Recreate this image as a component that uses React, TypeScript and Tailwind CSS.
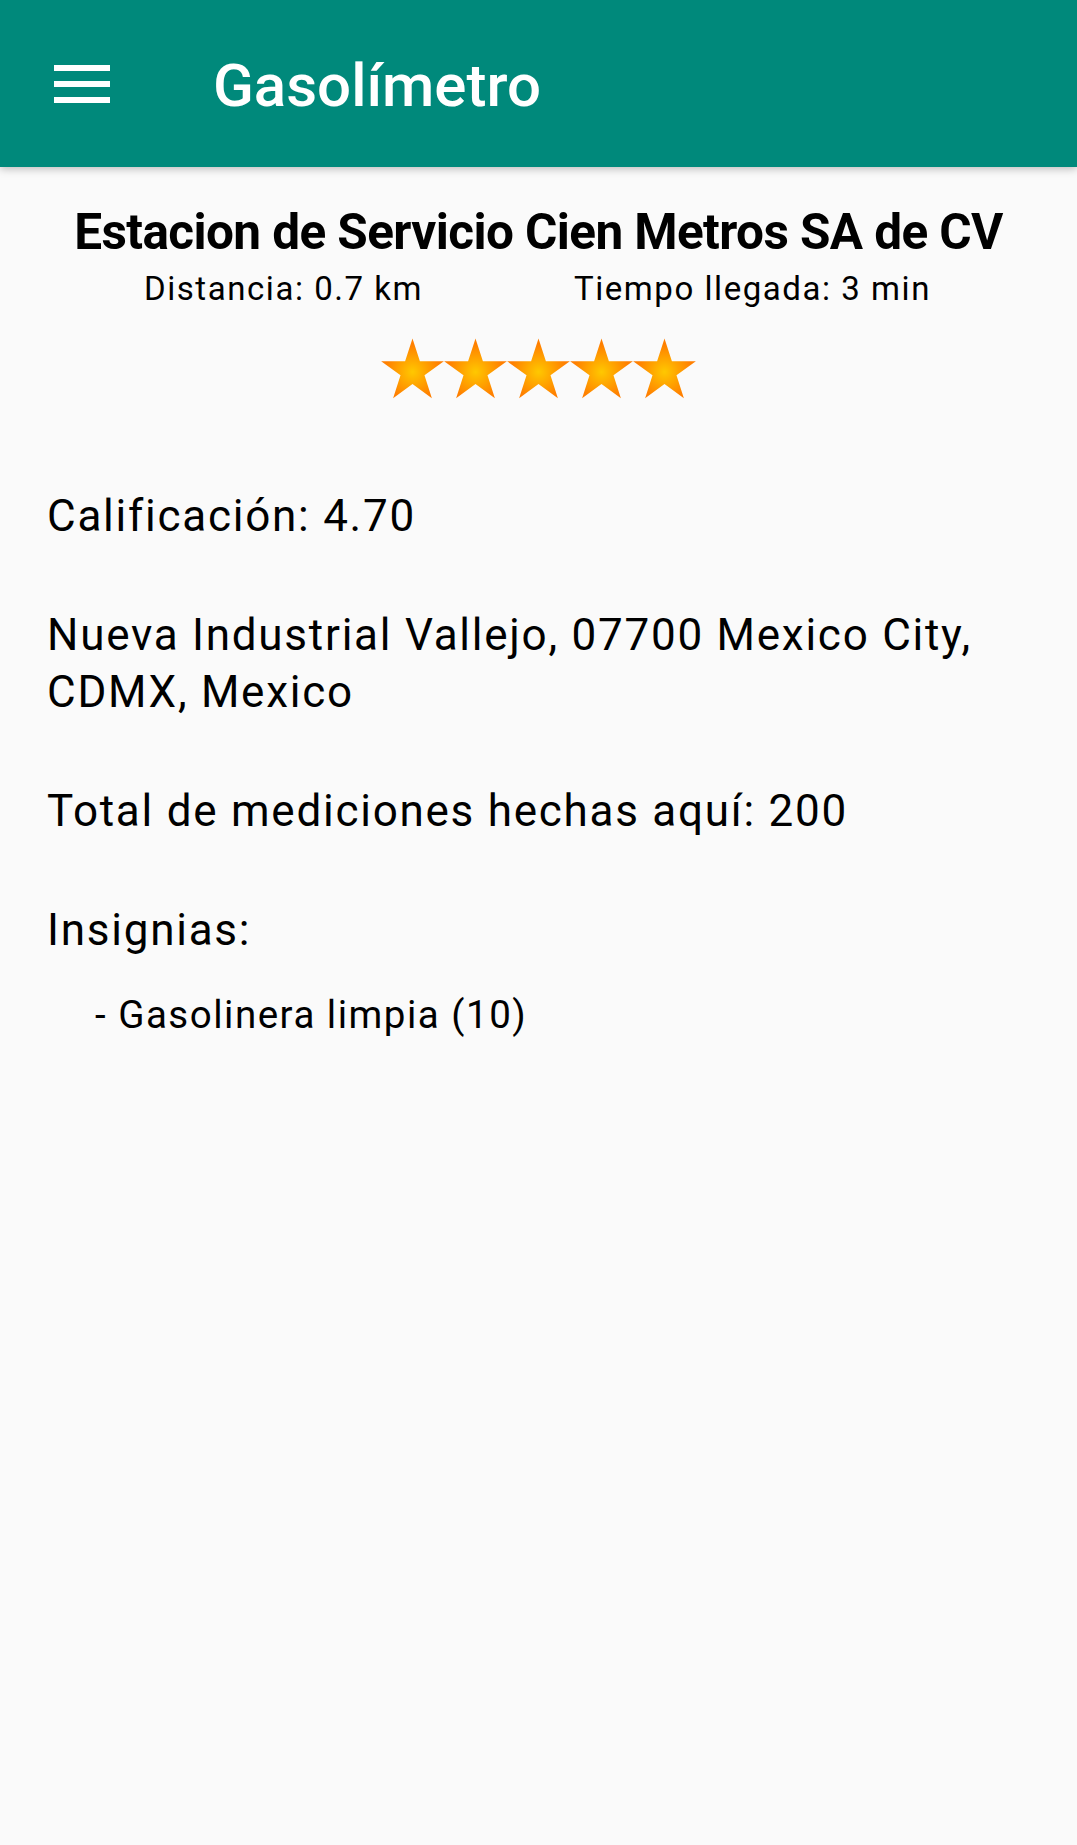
import React from 'react';

const font = { fontFamily: 'Roboto, "Noto Sans", sans-serif' };

function Star({ id }: { id: string }) {
  return (
    <svg viewBox="0 0 64 61" className="w-[63px] h-[61px] shrink-0 overflow-visible">
      <defs>
        <radialGradient id={id} cx="32" cy="34" r="28" gradientUnits="userSpaceOnUse">
          <stop offset="0" stopColor="#ffc800" />
          <stop offset="1" stopColor="#ff7f00" />
        </radialGradient>
      </defs>
      <polygon
        fill={`url(#${id})`}
        points="32,0 39.52,23.14 63.86,23.15 44.17,37.46 51.69,60.6 32,46.3 12.31,60.6 19.83,37.46 0.14,23.15 24.48,23.14"
      />
    </svg>
  );
}

export default function App() {
  return (
    <div className="min-h-[1845px] w-full bg-[#fafafa] text-black" style={font}>
      {/* toolbar */}
      <header className="relative z-10 flex h-[167px] items-center bg-[#00897b] shadow-[0_2px_8px_rgba(0,0,0,0.25)]">
        <button className="ml-[54px] flex h-[38px] w-[56px] flex-col justify-between">
          <span className="block h-[6px] w-[56px] bg-white" />
          <span className="block h-[6px] w-[56px] bg-white" />
          <span className="block h-[6px] w-[56px] bg-white" />
        </button>
        <h1 className="ml-[103px] mt-[4px] text-[60px] leading-[70px] font-medium text-white">
          Gasolímetro
        </h1>
      </header>

      <main className="pt-[36px]">
        <h2 className="text-center text-[49.5px] leading-[58px] font-bold tracking-[-0.6px]">
          Estacion de Servicio Cien Metros SA de CV
        </h2>
        <div className="mt-[8px] grid grid-cols-[574px_1fr] text-[33px] leading-[39px] tracking-[1.55px]">
          <span className="pl-[144px]">Distancia: 0.7 km</span>
          <span>Tiempo llegada: 3 min</span>
        </div>

        <div className="mt-[30px] flex justify-center">
          {[0, 1, 2, 3, 4].map((i) => (
            <Star key={i} id={`star-grad-${i}`} />
          ))}
        </div>

        <div className="mt-[89px] flex flex-col gap-[62px] px-[47px] text-[44px] leading-[57px] tracking-[1.75px]">
          <p>Calificación: 4.70</p>
          <p>Nueva Industrial Vallejo, 07700 Mexico City, CDMX, Mexico</p>
          <p>Total de mediciones hechas aquí: 200</p>
          <p>Insignias:</p>
        </div>
        <ul className="mt-[33px] pl-[95px] text-[38.5px] leading-[45px] tracking-[1.5px]">
          <li>- Gasolinera limpia (10)</li>
        </ul>
      </main>
    </div>
  );
}
